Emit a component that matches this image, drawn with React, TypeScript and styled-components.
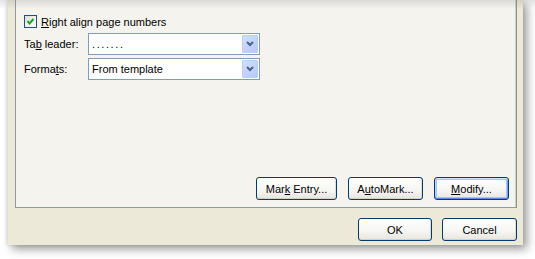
import React from "react";
import styled, { createGlobalStyle } from "styled-components";

const GlobalStyle = createGlobalStyle`
  html, body {
    margin: 0;
    padding: 0;
    background: #ffffff;
  }
  body {
    font-family: Tahoma, "Liberation Sans", Arial, sans-serif;
    font-size: 11px;
    color: #000;
  }
`;

const Stage = styled.div`
  position: relative;
  width: 535px;
  height: 259px;
  overflow: hidden;

  &::after {
    content: "";
    position: absolute;
    left: 0;
    right: 0;
    top: 0;
    height: 9px;
    background: linear-gradient(rgba(120, 120, 120, 0.2), rgba(120, 120, 120, 0));
    pointer-events: none;
  }
`;

const Dialog = styled.div`
  margin-left: 8px;
  width: 515px;
  height: 245px;
  box-sizing: border-box;
  background: #ece9d8;
  padding: 0 6px 0 7px;
  display: flex;
  flex-direction: column;
  box-shadow: 4px 4px 9px rgba(0, 0, 0, 0.4), -1px 0 4px rgba(0, 0, 0, 0.12);
`;

const Panel = styled.div`
  width: 502px;
  height: 208px;
  box-sizing: border-box;
  background: #f4f3ee;
  border: 1px solid #919b9c;
  border-top: none;
  border-right-color: #8a9293;
  box-shadow: inset -1px 0 0 #d0cfc6;
  padding: 15px 7px 7px 8px;
  display: flex;
  flex-direction: column;
`;

const CheckRow = styled.label`
  display: flex;
  align-items: center;
  gap: 4px;
  height: 13px;
  margin-bottom: 5px;
`;

const CheckBox = styled.span`
  width: 11px;
  height: 11px;
  border: 1px solid #1c5180;
  background: linear-gradient(135deg, #dcdcd7, #ffffff);
  display: flex;
  align-items: center;
  justify-content: center;
`;

const FieldRow = styled.div`
  display: flex;
  align-items: center;
  height: 22px;
  margin-bottom: 3px;
`;

const FieldLabel = styled.span`
  width: 64px;
`;

const Combo = styled.div`
  width: 172px;
  height: 22px;
  box-sizing: border-box;
  border: 1px solid #7f9db9;
  background: #ffffff;
  display: flex;
  align-items: center;
  padding: 1px 1px 1px 3px;
`;

const ComboText = styled.span<{ $spaced?: boolean }>`
  flex: 1;
  letter-spacing: ${(p) => (p.$spaced ? "1.6px" : "normal")};
`;

const DropButton = styled.span`
  width: 16px;
  height: 18px;
  box-sizing: border-box;
  border: 1px solid #bacdf5;
  border-radius: 1px;
  background: linear-gradient(135deg, #d2defc, #b5c8f7);
  display: flex;
  align-items: center;
  justify-content: center;
`;

const Spacer = styled.div`
  flex: 1;
`;

const ButtonRow = styled.div`
  display: flex;
  justify-content: flex-end;
  gap: 11px;
`;

const Button = styled.button<{ $w: number; $focus?: boolean }>`
  width: ${(p) => p.$w}px;
  height: 23px;
  box-sizing: border-box;
  border: 1px solid #003c74;
  border-radius: 3px;
  background: linear-gradient(#ffffff 0%, #f5f5f2 60%, #e6e4dc 100%);
  font-family: inherit;
  font-size: 11px;
  color: #000;
  padding: 0;
  box-shadow: ${(p) =>
    p.$focus
      ? "inset 0 1px 0 #cee7ff, inset 0 -1px 0 #6982ee, inset 1px 0 0 #b9d1fa, inset -1px 0 0 #7b9df0, inset 0 0 0 2px #a8c4f6"
      : "inset 0 -1px 0 #d6d0c5, inset -1px 0 0 #e2ddd2"};
`;

const Footer = styled.div`
  flex: 1;
  display: flex;
  justify-content: flex-end;
  align-items: flex-start;
  gap: 10px;
  padding-top: 10px;
`;

const Key = styled.span`
  text-decoration: underline;
`;

const Chevron = () => (
  <svg width="8" height="6" viewBox="0 0 8 6">
    <path d="M1 1 L4 4 L7 1" fill="none" stroke="#4d6185" strokeWidth="2" />
  </svg>
);

const Check = () => (
  <svg width="9" height="9" viewBox="0 0 9 9">
    <path d="M1.5 4 L3.5 6.5 L7.5 2" fill="none" stroke="#21a121" strokeWidth="2" />
  </svg>
);

const App: React.FC = () => {
  return (
    <Stage>
      <GlobalStyle />
      <Dialog>
        <Panel>
          <CheckRow>
            <CheckBox>
              <Check />
            </CheckBox>
            <span>
              <Key>R</Key>ight align page numbers
            </span>
          </CheckRow>
          <FieldRow>
            <FieldLabel>
              Ta<Key>b</Key> leader:
            </FieldLabel>
            <Combo>
              <ComboText $spaced>.......</ComboText>
              <DropButton>
                <Chevron />
              </DropButton>
            </Combo>
          </FieldRow>
          <FieldRow>
            <FieldLabel>
              Forma<Key>t</Key>s:
            </FieldLabel>
            <Combo>
              <ComboText>From template</ComboText>
              <DropButton>
                <Chevron />
              </DropButton>
            </Combo>
          </FieldRow>
          <Spacer />
          <ButtonRow>
            <Button $w={81}>
              Mar<Key>k</Key> Entry...
            </Button>
            <Button $w={75}>
              A<Key>u</Key>toMark...
            </Button>
            <Button $w={75} $focus>
              <Key>M</Key>odify...
            </Button>
          </ButtonRow>
        </Panel>
        <Footer>
          <Button $w={74}>OK</Button>
          <Button $w={75}>Cancel</Button>
        </Footer>
      </Dialog>
    </Stage>
  );
};

export default App;
